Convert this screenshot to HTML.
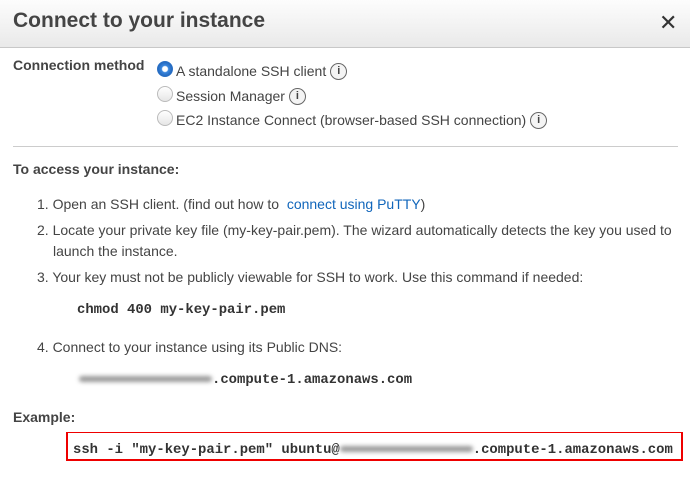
<!DOCTYPE html>
<html><head><meta charset="utf-8"><style>
*{margin:0;padding:0;box-sizing:border-box}
body{width:690px;height:477px;background:#fff;font-family:"Liberation Sans",sans-serif;color:#444;position:relative;overflow:hidden;font-size:14px;letter-spacing:0}
.hdr{position:absolute;left:0;top:0;width:690px;height:48px;background:linear-gradient(#fdfdfd,#e9e9e9);border-bottom:1px solid #c8c8c8}
.hdr h1{position:absolute;left:13px;top:9px;font-size:21px;font-weight:bold;color:#444;letter-spacing:0}
.x{position:absolute;left:659px;top:10px;font-size:22px;color:#333}
.t{position:absolute;white-space:nowrap;line-height:17px}
b.t{font-weight:bold}
.r{position:absolute;width:16px;height:16px;border-radius:50%;border:1px solid #bbb;background:linear-gradient(#fff,#e6e6e6)}
.r.on{border:1px solid #2a6fc4;background:radial-gradient(circle,#fff 0 2.5px,#3a86dd 3.5px,#1e62b8 8px)}
.i{display:inline-block;width:17px;height:17px;border:1px solid #666;border-radius:50%;font-size:11px;text-align:center;line-height:15px;font-weight:bold;vertical-align:top;margin-left:4px;color:#444;background:#f4f4f4}
.m{position:absolute;font-family:"Liberation Mono",monospace;font-weight:bold;font-size:13.9px;color:#333;white-space:nowrap}
.blur{display:inline-block;height:6px;background:#999;border-radius:3px;filter:blur(2px);vertical-align:middle}
a{color:#1166bb;text-decoration:none}
</style></head><body>
<div class="hdr"><h1>Connect to your instance</h1><div class="x">✕</div></div>
<b class="t" style="left:13px;top:57px">Connection method</b>
<div class="r on" style="left:157px;top:61px"></div>
<div class="t" style="left:176px;top:63px">A standalone SSH client<span class="i">i</span></div>
<div class="r" style="left:157px;top:86px"></div>
<div class="t" style="left:176px;top:88px">Session Manager<span class="i">i</span></div>
<div class="r" style="left:157px;top:110px"></div>
<div class="t" style="left:176px;top:112px">EC2 Instance Connect (browser-based SSH connection)<span class="i">i</span></div>
<div style="position:absolute;left:13px;top:146px;width:665px;height:1px;background:#ccc"></div>
<b class="t" style="left:13px;top:161px">To access your instance:</b>
<div class="t" style="left:37px;top:196px">1. Open an SSH client. (find out how to &nbsp;<a>connect using PuTTY</a>)</div>
<div class="t" style="left:37px;top:222px">2. Locate your private key file (my-key-pair.pem). The wizard automatically detects the key you used to</div>
<div class="t" style="left:53px;top:243px">launch the instance.</div>
<div class="t" style="left:37px;top:269px">3. Your key must not be publicly viewable for SSH to work. Use this command if needed:</div>
<div class="m" style="left:77px;top:302px">chmod 400 my-key-pair.pem</div>
<div class="t" style="left:37px;top:339px">4. Connect to your instance using its Public DNS:</div>
<div class="m" style="left:79px;top:372px"><span class="blur" style="width:133px"></span>.compute-1.amazonaws.com</div>
<b class="t" style="left:13px;top:409px">Example:</b>
<div style="position:absolute;left:66px;top:432px;width:617px;height:29px;border:2px solid #e00;border-top-width:1px"></div>
<div class="m" style="left:73px;top:442px">ssh -i "my-key-pair.pem" ubuntu@<span class="blur" style="width:133px"></span>.compute-1.amazonaws.com</div>
</body></html>
